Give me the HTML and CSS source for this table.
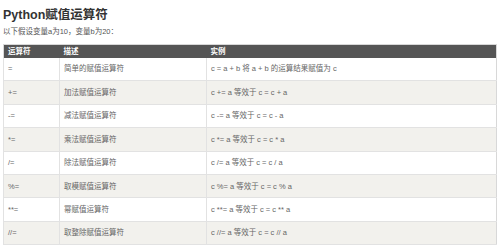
FILE: index.html
```html
<!DOCTYPE html>
<html lang="zh">
<head>
<meta charset="utf-8">
<title>Python赋值运算符</title>
<link rel="stylesheet" href="styles.css">
</head>
<body>
<h1 class="title">Python赋值运算符</h1>
<p class="intro">以下假设变量a为10，变量b为20：</p>
<table class="ops">
  <colgroup>
    <col class="c1"><col class="c2"><col class="c3">
  </colgroup>
  <thead>
    <tr><th>运算符</th><th>描述</th><th>实例</th></tr>
  </thead>
  <tbody>
    <tr><td>=</td><td>简单的赋值运算符</td><td>c = a + b 将 a + b 的运算结果赋值为 c</td></tr>
    <tr><td>+=</td><td>加法赋值运算符</td><td>c += a 等效于 c = c + a</td></tr>
    <tr><td>-=</td><td>减法赋值运算符</td><td>c -= a 等效于 c = c - a</td></tr>
    <tr><td>*=</td><td>乘法赋值运算符</td><td>c *= a 等效于 c = c * a</td></tr>
    <tr><td>/=</td><td>除法赋值运算符</td><td>c /= a 等效于 c = c / a</td></tr>
    <tr><td>%=</td><td>取模赋值运算符</td><td>c %= a 等效于 c = c % a</td></tr>
    <tr><td>**=</td><td>幂赋值运算符</td><td>c **= a 等效于 c = c ** a</td></tr>
    <tr><td>//=</td><td>取整除赋值运算符</td><td>c //= a 等效于 c = c // a</td></tr>
  </tbody>
</table>
</body>
</html>
```
FILE: styles.css
```css
html, body {
  margin: 0;
  padding: 0;
  background: #fff;
}
body {
  padding: 0 3px;
  font-family: "Liberation Sans", "Noto Sans CJK SC", sans-serif;
  color: #333;
}
.title {
  margin: 8px 0 0;
  font-size: 12.5px;
  line-height: 14px;
  font-weight: bold;
  color: #333;
}
.intro {
  margin: 6px 0 0;
  font-size: 7.5px;
  line-height: 8px;
  color: #555;
}
.ops {
  margin-top: 8px;
  width: 100%;
  border-collapse: collapse;
  border: 1px solid #d8d8d8;
  font-size: 7.5px;
  line-height: 9px;
}
.c1 { width: 56px; }
.c2 { width: 147px; }
.ops th {
  background: #555;
  color: #fff;
  font-weight: bold;
  text-align: left;
  height: 13px;
  padding: 0 4px;
  box-sizing: border-box;
}
.ops td {
  height: 23.4px;
  padding: 0 4px;
  box-sizing: border-box;
  color: #666;
  border-bottom: 1px solid #e2e2e2;
  border-left: 1px solid #e2e2e2;
  vertical-align: middle;
}
.ops tbody tr:nth-child(even) td {
  background: #f2f1ed;
}
```
